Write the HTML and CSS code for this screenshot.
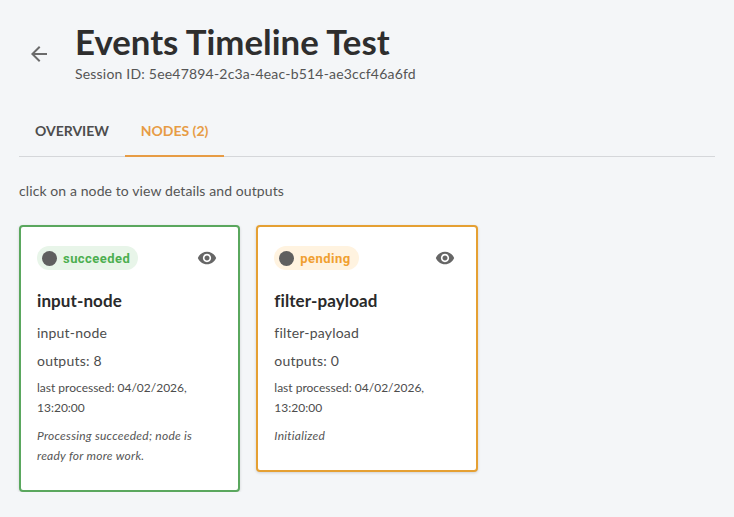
FILE: index.html
```html
<!DOCTYPE html>
<html lang="en">
<head>
  <meta charset="UTF-8" />
  <title>Events Timeline Test</title>
  <link rel="stylesheet" href="styles.css">
</head>
<body>

  <header class="page-head">
    <svg class="back" viewBox="0 0 24 24" width="24" height="24"><path d="M20 11H7.83l5.59-5.59L12 4l-8 8 8 8 1.41-1.41L7.83 13H20z"/></svg>
    <div>
      <h1>Events Timeline Test</h1>
      <p class="session">Session ID: 5ee47894-2c3a-4eac-b514-ae3ccf46a6fd</p>
    </div>
  </header>

  <nav class="tabs">
    <a href="#overview">OVERVIEW</a>
    <a href="#nodes" class="active">NODES (2)</a>
  </nav>

  <p class="hint">click on a node to view details and outputs</p>

  <section class="nodes">
    <div class="card ok">
      <div class="card-top">
        <span class="chip"><i class="dot"></i>succeeded</span>
        <svg class="eye" viewBox="0 0 24 24" width="20" height="20"><path d="M12 4.5C7 4.5 2.73 7.61 1 12c1.73 4.39 6 7.5 11 7.5s9.27-3.11 11-7.5c-1.73-4.39-6-7.5-11-7.5zM12 17c-2.76 0-5-2.24-5-5s2.24-5 5-5 5 2.24 5 5-2.24 5-5 5zm0-8c-1.66 0-3 1.34-3 3s1.34 3 3 3 3-1.34 3-3-1.34-3-3-3z"/></svg>
      </div>
      <h2>input-node</h2>
      <p class="line">input-node</p>
      <p class="line">outputs: 8</p>
      <p class="small">last processed: 04/02/2026, 13:20:00</p>
      <p class="small note">Processing succeeded; node is ready for more work.</p>
    </div>

    <div class="card wait">
      <div class="card-top">
        <span class="chip"><i class="dot"></i>pending</span>
        <svg class="eye" viewBox="0 0 24 24" width="20" height="20"><path d="M12 4.5C7 4.5 2.73 7.61 1 12c1.73 4.39 6 7.5 11 7.5s9.27-3.11 11-7.5c-1.73-4.39-6-7.5-11-7.5zM12 17c-2.76 0-5-2.24-5-5s2.24-5 5-5 5 2.24 5 5-2.24 5-5 5zm0-8c-1.66 0-3 1.34-3 3s1.34 3 3 3 3-1.34 3-3-1.34-3-3-3z"/></svg>
      </div>
      <h2>filter-payload</h2>
      <p class="line">filter-payload</p>
      <p class="line">outputs: 0</p>
      <p class="small">last processed: 04/02/2026, 13:20:00</p>
      <p class="small note">Initialized</p>
    </div>
  </section>

</body>
</html>
```

FILE: styles.css
```css
* {
  margin: 0;
  padding: 0;
  box-sizing: border-box;
  font-family: 'Lato', 'Noto Sans', sans-serif;
}

body {
  background-color: #f4f6f8;
  color: #4d4d4d;
  padding: 19px 19px 0;
  overflow: hidden;
}

.page-head {
  display: flex;
  align-items: center;
  gap: 24px;
  padding-left: 8px;
}

.back {
  fill: #6b6b6b;
  flex: none;
  margin-top: 5px;
}

h1 {
  font-size: 34.8px;
  line-height: 46px;
  font-weight: 700;
  color: #2e2e2e;
}

.session {
  font-size: 14px;
  line-height: 18px;
  letter-spacing: 0.2px;
  color: #555;
}

.tabs {
  display: flex;
  margin-top: 26px;
  border-bottom: 1px solid #d5d7da;
  height: 48px;
}

.tabs a {
  display: flex;
  align-items: center;
  justify-content: center;
  width: 99px;
  padding-bottom: 4px;
  font-size: 14px;
  font-weight: 700;
  color: #4d4d4d;
  text-decoration: none;
}

.tabs a:first-child {
  width: 106px;
}

.tabs a.active {
  color: #e79c45;
  border-bottom: 2px solid #e79c45;
  height: 48px;
}

.hint {
  font-size: 14px;
  line-height: 20px;
  letter-spacing: 0.1px;
  margin-top: 24px;
  color: #555;
}

.nodes {
  display: flex;
  align-items: flex-start;
  gap: 16px;
  margin-top: 24px;
}

.card {
  width: 221.33px;
  background: #fff;
  border: 2px solid #4caf50;
  border-radius: 4px;
  padding: 19px 16px 24px;
  box-shadow: 0 1px 3px rgba(0, 0, 0, 0.15);
}

.card.ok { border-color: #5aa75e; }
.card.wait { border-color: #e5a033; }

.card-top {
  display: flex;
  justify-content: space-between;
  align-items: center;
  height: 24px;
  padding-right: 5px;
}

.chip {
  display: inline-flex;
  align-items: center;
  height: 24px;
  border-radius: 12px;
  padding: 0 8px 0 5px;
  font-family: 'Roboto', sans-serif;
  font-size: 13px;
  font-weight: 700;
  letter-spacing: 0.45px;
}

.ok .chip { background: #e8f5e9; color: #4caf50; }
.wait .chip { background: #fff3e0; color: #f0a030; }

.dot {
  width: 15px;
  height: 15px;
  border-radius: 50%;
  background: #5f5f5f;
  margin-right: 6px;
}

.eye {
  fill: #666;
}

h2 {
  font-size: 17px;
  line-height: 24px;
  font-weight: 700;
  letter-spacing: 0.1px;
  color: #2a2a2a;
  margin-top: 19px;
}

.line {
  font-size: 14px;
  line-height: 20px;
  letter-spacing: 0.2px;
  margin-top: 8px;
}

h2 + .line {
  margin-top: 10px;
}

.small {
  font-size: 12px;
  line-height: 20px;
  margin-top: 7px;
}

.note {
  font-style: italic;
  letter-spacing: 0.25px;
  color: #555;
  margin-top: 8px;
}
```
